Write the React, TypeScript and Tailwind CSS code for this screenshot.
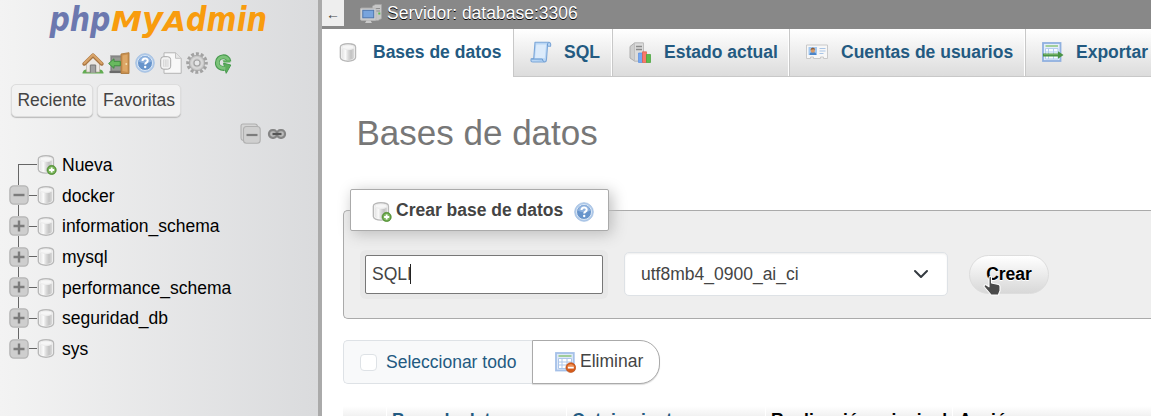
import React, { useId } from "react";

type IconProps = { className?: string };

function DbShape() {
  const id = useId();
  return (
    <>
      <defs>
        <linearGradient id={id}>
          <stop offset="0" stopColor="#e2e2e2" />
          <stop offset="0.3" stopColor="#fafafa" />
          <stop offset="0.5" stopColor="#dddddd" />
          <stop offset="0.75" stopColor="#c2c2c2" />
          <stop offset="1" stopColor="#dadada" />
        </linearGradient>
      </defs>
      <path d="M1.200 3.600C1.200 1.800 4.300.7 8 .7s6.800 1.100 6.800 2.900v9.400c0 1.900-3.100 3.300-6.800 3.300s-6.800-1.400-6.800-3.300z" fill="#f8f8f8" stroke="#b8b8b8" strokeWidth="1.200" />
      <path d="M2.400 4.500c1 1.200 3 1.700 5.600 1.700s4.600-.5 5.600-1.700v8.200c0 1.500-2.500 2.400-5.600 2.400s-5.600-.9-5.600-2.400z" fill={`url(#${id})`} />
      <ellipse cx="8" cy="3.700" rx="5.400" ry="2" fill="#f6f6f6" stroke="#e0e0e0" strokeWidth=".5" />
    </>
  );
}

function DbIcon({ className = "" }: IconProps) {
  return (
    <svg viewBox="0 0 17 17" className={`size-[19px] shrink-0 ${className}`}>
      <DbShape />
    </svg>
  );
}

function DbAddIcon({ className = "" }: IconProps) {
  return (
    <svg viewBox="0 0 18 18" className={`size-5 shrink-0 ${className}`}>
      <DbShape />
      <circle cx="13.200" cy="13.500" r="4.200" fill="#5c993d" stroke="#4b8a2c" strokeWidth=".5" />
      <circle cx="13.200" cy="13.500" r="3.200" fill="#7fb860" />
      <path d="M13.200 11.200v4.600M10.900 13.500h4.600" stroke="#fff" strokeWidth="1.600" />
    </svg>
  );
}

function HelpIcon({ className = "" }: IconProps) {
  return (
    <svg viewBox="0 0 20 20" className={`size-[20px] shrink-0 ${className}`}>
      <circle cx="10" cy="10" r="9.300" fill="#b3cceb" stroke="#9dbbe0" strokeWidth=".8" />
      <circle cx="10" cy="10" r="7.500" fill="#6794cb" stroke="#dbe8f6" strokeWidth="1" />
      <path d="M3.800 8.500a6.300 6.300 0 0 1 12.400 0c-3 2-8.400 2.500-12.400 0z" fill="#8fb2de" />
      <path d="M7.500 8c0-3.300 5.200-3.300 5.200-.3 0 1.900-2.500 1.900-2.500 3.800" fill="none" stroke="#fff" strokeWidth="2" />
      <circle cx="10.200" cy="14" r="1.200" fill="#fff" />
    </svg>
  );
}

function HomeIcon() {
  return (
    <svg viewBox="0 0 22 22" className="size-[22px]">
      <path d="M.5 20.500q1.700-4.500 5-2.500h11q3.300-2 5 2.500v1H.5z" fill="#62ab52" />
      <path d="M4.500 10.500 11 4.500l6.500 6V20h-13z" fill="#ece8e3" stroke="#b9aea2" strokeWidth=".7" />
      <path d="M8.300 20.700V13h5.400v7.700" fill="#a2a2a2" stroke="#777" />
      <path d="M2.300 11.800 11 3.300l8.700 8.500" fill="none" stroke="#a87440" strokeWidth="3.800" strokeLinejoin="round" strokeLinecap="round" />
      <path d="M2.400 11.200 11 2.800l8.600 8.400" fill="none" stroke="#d8a368" strokeWidth="2.200" strokeLinejoin="round" strokeLinecap="round" />
    </svg>
  );
}

function ExitIcon() {
  return (
    <svg viewBox="0 0 22 22" className="size-[22px]">
      <path d="M2.500 3.500h14v17h-14z" fill="#858585" stroke="#aaa" />
      <path d="M4 5.500h9v13H4z" fill="#969a93" />
      <path d="M1.500 20h14" stroke="#6a6a6a" strokeWidth="2.200" />
      <path d="M13 2 21 .7v20.800H13z" fill="#c98f4e" stroke="#ad7b40" strokeWidth=".9" />
      <path d="M14.500 3.500l5-1v17.500l-5-1z" fill="#dda766" />
      <circle cx="18.300" cy="12" r="1" fill="#f6e0b0" />
      <path d="M.6 11.500 6 6.800v2.500h6.300v4.500H6v2.500z" fill="#69b95f" stroke="#3a8a3c" strokeWidth=".9" />
    </svg>
  );
}

function DocsIcon() {
  return (
    <svg viewBox="0 0 22 22" className="size-[22px]">
      <path d="M4 .8h11.500l5.700 5.500v15H4z" fill="#f8f8f8" stroke="#b4b4b4" />
      <path d="M15.500.8v5.500h5.700" fill="#e6e6e6" stroke="#c2c2c2" />
      <rect x=".7" y="4.700" width="10" height="12.500" rx="3" fill="#f2f2f2" stroke="#a8a8a8" />
      <rect x="3" y="7.500" width="5.500" height="7.200" fill="#d8d8d8" />
      <path d="M4.700 7.500v7M7 7.500v7" stroke="#f0f0f0" strokeWidth=".8" />
    </svg>
  );
}

function GearIcon() {
  return (
    <svg viewBox="0 0 22 22" className="size-[22px]">
      <circle cx="11" cy="11" r="9" fill="none" stroke="#a2a2a2" strokeWidth="3.600" strokeDasharray="2.900 1.812" strokeDashoffset="1.350" />
      <circle cx="11" cy="11" r="7.700" fill="#c9c9c9" stroke="#a6a6a6" strokeWidth=".9" />
      <circle cx="11" cy="11" r="5.200" fill="none" stroke="#d9d9d9" strokeWidth="1.600" />
      <circle cx="11" cy="11" r="3" fill="#e6e7e8" stroke="#a3a3a3" strokeWidth="1.100" />
    </svg>
  );
}

function ReloadIcon() {
  return (
    <svg viewBox="0 0 22 22" className="size-[22px]">
      <path d="M17 9.500C16 2.500 5.300 3.500 5.300 10.800c0 4.200 3.500 6 7.200 5.700" fill="none" stroke="#479a4e" strokeWidth="4.800" />
      <path d="M11.500 11.200 18.800 13l-4.600 8.300z" fill="#5cae5b" stroke="#479a4e" strokeLinejoin="round" />
      <path d="M16.700 9C15.500 3 5.500 3.800 5.500 10.800c0 4 3.500 5.700 8 5.400" fill="none" stroke="#7cc37a" strokeWidth="3" />
      <path d="M10.500 8.200h7.800v2.200h-6.500z" fill="#5cae5b" />
    </svg>
  );
}

function ToggleIcon({ open }: { open?: boolean }) {
  return (
    <svg viewBox="0 0 20 20" className="size-5 shrink-0">
      <rect x=".9" y=".9" width="18.200" height="18.200" rx="4" fill="#cecece" stroke="#b4b4b4" strokeWidth="1.300" />
      <path d={open ? "M4.500 10h11" : "M4.500 10h11M10 4.500v11"} stroke="#7c7c7c" strokeWidth="2.400" />
    </svg>
  );
}

function CollapseAllIcon() {
  return (
    <svg viewBox="0 0 21 21" className="size-[21px]">
      <path d="M3 17.500q-2-.5-2-2.500V3q0-2 2-2h12q2 0 2.500 2" fill="#d5d5d5" stroke="#b0b0b0" strokeWidth="1.100" />
      <rect x="3.500" y="3.500" width="16.700" height="16.700" rx="3" fill="#cfcfcf" stroke="#b0b0b0" strokeWidth="1.100" />
      <path d="M6.500 12h11" stroke="#7c7c7c" strokeWidth="2.200" />
    </svg>
  );
}

function ChainIcon() {
  return (
    <svg viewBox="0 0 20 12" className="h-3 w-5">
      <rect x="2" y="2.200" width="8" height="7.600" rx="3.500" fill="#bbb" stroke="#858585" strokeWidth="2.200" />
      <rect x="10" y="2.200" width="8" height="7.600" rx="3.500" fill="#bbb" stroke="#858585" strokeWidth="2.200" />
      <path d="M5.500 6h9" stroke="#555" strokeWidth="2.200" />
    </svg>
  );
}

function ServerIcon() {
  return (
    <svg viewBox="0 0 22 20" className="h-5 w-[22px]">
      <path d="M12.500 2 15.500.5h6v14L18 16.500h-5.500z" fill="#c6c6c6" stroke="#a5a5a5" strokeWidth=".7" />
      <path d="M15 4.500h5M15 7h5" stroke="#8c8c8c" />
      <path d="M18.300 8.500h2v2h-2z" fill="#5cbb52" />
      <rect x=".5" y="4.200" width="15.500" height="12" rx="1" fill="#cfcfcf" stroke="#b9b9b9" />
      <rect x="2.800" y="6.300" width="10.900" height="7.500" fill="#78a4dd" stroke="#4d76ad" />
      <path d="M6.500 16.500h4l1.500 2.600H5z" fill="#c9c9c9" />
    </svg>
  );
}

function ScrollIcon() {
  return (
    <svg viewBox="0 0 22 22" className="size-[22px]">
      <path d="M5 1.300h13.500c2 0 2.600 1.600 2 4h-3L16.500 18c0 2-.6 3-2 3H3c-1.800 0-2.500-1-1.800-3.300H3.700z" fill="#b9d6f5" stroke="#7ba6d8" strokeWidth="1.100" strokeLinejoin="round" />
      <path d="M6.300 3.500h9.800l-1.300 13.700H5z" fill="#dcebfb" />
      <path d="M1.400 18h11q0 2.500 2 2.700" fill="#a7cbf0" stroke="#6c9bd0" />
      <path d="M17.600 5q-.6-2.300.8-3.400" fill="none" stroke="#6c9bd0" />
    </svg>
  );
}

function StatusIcon() {
  return (
    <svg viewBox="0 0 22 21" className="h-[21px] w-[22px]">
      <path d="M1 4.500 5.500 1h9v18H5.500L1 16z" fill="#cfcfcf" stroke="#aeaeae" />
      <path d="M5.500 1h9v18h-9z" fill="#dcdcdc" stroke="#bbb" strokeWidth=".8" />
      <path d="M7 4.500h6M7 7.500h6" stroke="#8b8b8b" strokeWidth="1.300" />
      <path d="M9.500 11h4v9.500h-4z" fill="#74a7f2" stroke="#5a8fe0" strokeWidth=".7" />
      <path d="M13.500 9.800h4v10.700h-4z" fill="#f9796a" stroke="#e05a48" strokeWidth=".7" />
      <path d="M17.500 12.500h4v8h-4z" fill="#5dbb4d" stroke="#43a137" strokeWidth=".7" />
    </svg>
  );
}

function UserCardIcon() {
  return (
    <svg viewBox="0 0 22 16" className="h-4 w-[22px]">
      <path d="M.5 1h21v13.500h-4V13h-3v1.500h-7V13h-3v1.500h-4z" fill="#f7f7f7" stroke="#c9c9c9" />
      <path d="M2.500 3h8.500v8H2.500z" fill="#a3c8f0" />
      <path d="M3.500 11q0-3 3.400-3t3.400 3" fill="#4b85c9" />
      <circle cx="6.800" cy="6.500" r="2.200" fill="#d79a67" />
      <path d="M4.500 6q.3-2.500 2.400-2.500T9.200 6q-1.500-1.500-4.700 0" fill="#8c5c38" />
      <path d="M13.500 4.500h6M13.500 7h6M13.500 9.500h4" stroke="#a9c5e6" />
    </svg>
  );
}

function ExportIcon() {
  return (
    <svg viewBox="0 0 22 20" className="h-5 w-[22px]">
      <rect x="1" y="1" width="17.500" height="18" fill="#e3edfa" stroke="#8fb0df" strokeWidth="1.800" />
      <path d="M3.500 4h12.500" stroke="#86c270" strokeWidth="1.400" />
      <path d="M3.500 6.500h12.500v10.500H3.500zM3.500 10h12.500M3.500 13.500h12.500M6.500 6.500v10.500M11.500 6.500v10.500" fill="#f6faff" stroke="#b3cdee" />
      <path d="M1 11.500h15V9.300l5.500 3.700-5.500 3.700v-2.300H1z" fill="#4a9445" />
      <path d="M2 12.500h14" stroke="#79b56b" strokeWidth=".8" />
    </svg>
  );
}

function DropIcon() {
  return (
    <svg viewBox="0 0 21 21" className="size-[21px]">
      <rect x="1" y="1" width="17.800" height="17.500" fill="#dfe9f8" stroke="#a5c0e8" strokeWidth="1.800" />
      <path d="M3.500 4h13" stroke="#86c270" strokeWidth="1.400" />
      <path d="M3.500 6.500h13v10h-13zM3.500 10h13M3.500 13h13M7 6.500v10M12 6.500v10" fill="#fff" stroke="#adc6e9" />
      <circle cx="15.800" cy="15.600" r="4.900" fill="#d55c1c" stroke="#b9480f" strokeWidth=".6" />
      <path d="M12 14.500q4-5 7.700 0" fill="#ef9154" />
      <path d="M12.800 15.600h6" stroke="#fff" strokeWidth="1.900" />
    </svg>
  );
}

function HandCursor() {
  return (
    <svg viewBox="0 0 18 22" className="h-[22px] w-[18px]">
      <path d="M6 2.200Q7 .7 8.500 2.200V8l7 1.500q1.500.5 1.500 2v4.200L15.300 20H8.200L1 11.500q0-2 2-1.700l3 2z" fill="#4b4b4b" stroke="#fff" strokeWidth="1.100" strokeLinejoin="round" />
    </svg>
  );
}

function Logo() {
  return (
    <svg viewBox="0 0 222 38" className="h-[38px] w-[222px] overflow-visible [font-family:'DejaVu_Sans',sans-serif] font-bold italic" aria-label="phpMyAdmin">
      <g fill="#6c78af">
        <text x="2.500" y="27" fontSize="33" textLength="61" lengthAdjust="spacingAndGlyphs">php</text>
      </g>
      <g fill="#f89c0e">
        <text x="64" y="27" fontSize="26.500" textLength="31" lengthAdjust="spacingAndGlyphs">M</text>
        <text x="95" y="27" fontSize="33" textLength="21" lengthAdjust="spacingAndGlyphs">y</text>
        <text x="116" y="27" fontSize="26.500" textLength="23" lengthAdjust="spacingAndGlyphs">A</text>
        <text x="139" y="27" fontSize="33" textLength="81" lengthAdjust="spacingAndGlyphs">dmin</text>
      </g>
    </svg>
  );
}

const databases = ["docker", "information_schema", "mysql", "performance_schema", "seguridad_db", "sys"];

function Sidebar() {
  return (
    <aside className="flex w-[322px] shrink-0 flex-col border-r-4 border-[#aaaaaa] bg-linear-to-r from-[#f3f3f3] to-[#dadbdd]">
      <div className="mt-1 ml-[47px] h-[38px]"><Logo /></div>
      <div className="mt-[10px] ml-[82px] flex h-[22px] items-center gap-1">
        <HomeIcon /><ExitIcon /><div className="flex w-[22px] justify-center"><HelpIcon /></div><DocsIcon /><GearIcon /><ReloadIcon />
      </div>
      <div className="mt-[10px] ml-[11px] flex gap-1 text-[#444]">
        <button className="h-[33px] w-[82px] rounded-[5px] border border-[#ddd] bg-[#f2f2f2] pb-[2px] shadow-[0_1px_1px_#bbb]">Reciente</button>
        <button className="h-[33px] w-[84px] rounded-[5px] border border-[#ddd] bg-[#f2f2f2] pb-[2px] shadow-[0_1px_1px_#bbb]">Favoritas</button>
      </div>
      <div className="mt-[6px] ml-[240px] flex h-[21px] items-center gap-[6px]"><CollapseAllIcon /><ChainIcon /></div>
      <ul className="mt-[5px] ml-[9px]">
        <li className="flex h-[31px] items-center">
          <span className="mt-[15px] ml-[9px] h-4 w-[19px] border-t border-l border-[#666]" />
          <DbAddIcon />
          <span className="ml-[5px]">Nueva</span>
        </li>
        {databases.map((name, i) => (
          <li key={name} className="flex h-[30.700px] items-center">
            <span className="flex h-full w-5 flex-col items-center">
              <span className="-ml-[1px] w-px flex-1 bg-[#666]" />
              <ToggleIcon open={i === 0} />
              <span className={i === databases.length - 1 ? "flex-1" : "-ml-[1px] w-px flex-1 bg-[#666]"} />
            </span>
            <span className="h-px w-2 bg-[#666]" />
            <DbIcon />
            <span className="mt-[0.600px] ml-[6px]">{name}</span>
          </li>
        ))}
      </ul>
    </aside>
  );
}

const tabClass = "flex h-12 shrink-0 items-center border-r border-b border-[#c8c8c8] bg-linear-to-b from-white to-[#dcdcdc] pb-px pl-4 shadow-[inset_-1px_0_0_#fff]";

function Tabs() {
  return (
    <nav className="flex h-12 shrink-0 overflow-hidden font-bold whitespace-nowrap text-[#235a81]">
      <div className="flex h-12 w-[192px] shrink-0 items-center border-r border-[#c8c8c8] pb-[2px] pl-[17px]"><DbIcon /><span className="ml-[15px]">Bases de datos</span></div>
      <div className={`${tabClass} w-[99px]`}><ScrollIcon /><span className="ml-[12px]">SQL</span></div>
      <div className={`${tabClass} w-[177px]`}><StatusIcon /><span className="ml-[13px]">Estado actual</span></div>
      <div className={`${tabClass} w-[236px]`}><UserCardIcon /><span className="ml-[13px]">Cuentas de usuarios</span></div>
      <div className={`${tabClass} w-[180px]`}><ExportIcon /><span className="ml-[12px]">Exportar</span></div>
    </nav>
  );
}

function CreateForm() {
  return (
    <fieldset className="relative mt-[56px] ml-[21px] h-[109px] shrink-0 rounded-l-[5px] border border-r-0 border-[#aaa] bg-[#eee]">
      <div className="absolute -top-[22px] left-[6px] flex h-[42px] w-[259px] items-center rounded-[2px] border border-[#aaa] bg-white pl-[21px] font-bold text-[#444] shadow-[3px_3px_15px_#bbb]">
        <DbAddIcon className="mt-[3px]" />
        <span className="ml-1">Crear base de datos</span>
        <HelpIcon className="mt-[3px] ml-[11px]" />
      </div>
      <div className="flex items-start pt-[41px] pl-[21px]">
        <div className="mt-[3px] flex h-[39px] w-[238px] items-center rounded-[2px] border border-[#777] bg-white pb-[2px] pl-[6px] text-[#444] shadow-[0_0_0_5px_#e8e8e8]">
          <span>SQLI</span><span className="-ml-[2px] h-5 w-px bg-[#222]" />
        </div>
        <div className="ml-[21px] flex h-[44px] w-[324px] items-center justify-between rounded-[5px] border border-[#dee2e6] bg-white pr-[18px] pl-4 text-[#444] shadow-[inset_0_1px_2px_#eee]">
          <span>utf8mb4_0900_ai_ci</span>
          <svg viewBox="0 0 16 16" className="size-4" fill="none" stroke="#343a40" strokeWidth="2" strokeLinecap="round" strokeLinejoin="round"><path d="m2 5 6 6 6-6" /></svg>
        </div>
        <button className="relative mt-[3px] ml-[21px] h-[39px] w-[80px] rounded-full border border-[#ddd] bg-linear-to-b from-white to-[#d8d8d8] pb-px font-bold text-black [text-shadow:0_1px_0_#fff]">
          Crear
          <span className="absolute top-[19px] left-[13px]"><HandCursor /></span>
        </button>
      </div>
    </fieldset>
  );
}

export default function App() {
  return (
    <div className="flex h-[416px] w-[1151px] overflow-hidden bg-white [font-family:'Liberation_Sans',Arial,sans-serif] text-[17.5px] leading-[26px] text-black">
      <Sidebar />
      <main className="flex min-w-0 flex-1 flex-col">
        <header className="flex h-[29px] shrink-0 bg-[#888]">
          <div className="h-[26px] w-[22px] bg-[#eee] text-center text-[14px] leading-[28px] text-[#444]">←</div>
          <div className="mt-1 ml-4"><ServerIcon /></div>
          <span className="ml-[5px] text-white [text-shadow:0_1px_0_#000]">Servidor: database:3306</span>
        </header>
        <Tabs />
        <h1 className="mt-[34px] ml-[34.500px] h-[43px] shrink-0 text-[35px] leading-[43px] text-[#777]">Bases de datos</h1>
        <CreateForm />
        <div className="mt-[21px] ml-[21px] flex h-[44px] shrink-0">
          <label className="flex w-[189px] items-center rounded-l-[5px] border border-r-0 border-[#dee2e6] bg-[#f8f9fa] pl-4 text-[#235a81]">
            <span className="size-[17px] rounded-[4px] border border-[#dee2e6] bg-white" />
            <span className="ml-[9px]">Seleccionar todo</span>
          </label>
          <button className="flex w-[128px] items-center rounded-r-[20px] border border-[#aaa] bg-white pl-[22px] text-[#444] shadow-[0_1px_1px_#ddd]">
            <DropIcon /><span className="mb-[2px] ml-1">Eliminar</span>
          </button>
        </div>
        <div className="mt-[22px] ml-[21px] flex h-[38px] shrink-0 bg-linear-to-b from-white to-[#ccc] pt-px font-bold whitespace-nowrap text-[#235a81]">
          <span className="w-[44px] shrink-0 border-r border-white" />
          <span className="w-[180px] shrink-0 border-r border-white pl-[5px]">Base de datos</span>
          <span className="w-[199px] shrink-0 border-r border-white pl-[5px]">Cotejamiento</span>
          <span className="w-[187px] shrink-0 border-r border-white pl-[5px] text-black">Replicación principal</span>
          <span className="pl-[6px] text-black">Acción</span>
        </div>
      </main>
    </div>
  );
}
